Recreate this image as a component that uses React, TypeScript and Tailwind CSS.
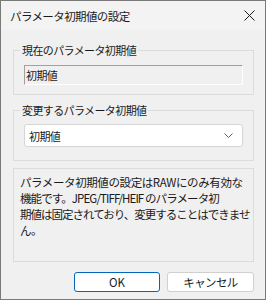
import React from "react";

const font = { fontFamily: '"Noto Sans CJK JP", "Noto Sans", sans-serif' };

export default function App() {
  return (
    <div
      style={font}
      className="w-[266px] h-[300px] flex flex-col border border-[#7a7a7a] bg-[#f0f0f0] text-[11px] tracking-[-0.6px] text-[#1a1a1a] overflow-hidden"
    >
      {/* title bar */}
      <div className="h-[29px] flex items-center justify-between bg-[#f3f3f3] pl-[9px] pr-[9px]">
        <span className="text-[11.5px] leading-[16px]">パラメータ初期値の設定</span>
        <svg width="11" height="11" viewBox="0 0 11 11" className="mr-[1px]">
          <path d="M0.5 0.5 L10.5 10.5 M10.5 0.5 L0.5 10.5" stroke="#1a1a1a" strokeWidth="1" />
        </svg>
      </div>

      <div className="flex flex-col pl-[12px] pr-[11px] pt-[12px]">
        {/* current value */}
        <fieldset className="border border-[#dcdcdc] px-[10px] pb-[9px]">
          <legend className="-ml-[4px] px-[2px] leading-[16px]">現在のパラメータ初期値</legend>
          <div className="mt-[7px] h-[20px] flex items-center border border-t-[#a0a0a0] border-l-[#a0a0a0] border-r-white border-b-white bg-[#f0f0f0] pl-[1px] leading-[16px]">
            初期値
          </div>
        </fieldset>

        {/* new value */}
        <fieldset className="mt-[7px] border border-[#dcdcdc] px-[10px] pb-[13px]">
          <legend className="-ml-[4px] px-[2px] leading-[16px]">変更するパラメータ初期値</legend>
          <div className="mt-[6px] h-[23px] flex items-center justify-between rounded-[3px] border border-[#d5d5d5] bg-white pl-[4px] pr-[9px] leading-[16px]">
            <span>初期値</span>
            <svg width="9" height="5" viewBox="0 0 9 5">
              <path d="M0.5 0.5 L4.5 4.5 L8.5 0.5" fill="none" stroke="#606060" strokeWidth="1" />
            </svg>
          </div>
        </fieldset>

        {/* note */}
        <div className="mt-[7px] h-[94px] border border-[#dcdcdc] pl-[6px] pr-[2px] pt-[5px] leading-[16px] whitespace-nowrap text-[11.5px] tracking-[-0.4px]">
          パラメータ初期値の設定はRAWにのみ有効な
          <br />
          <span className="tracking-[-0.9px]">機能です。JPEG/TIFF/HEIF のパラメータ初</span>
          <br />
          <span className="tracking-[-1px]">期値は固定されており、変更することはできませ</span>
          <br />
          ん。
        </div>

        {/* buttons */}
        <div className="mt-[10px] flex justify-end gap-[7px]">
          <button className="w-[86px] h-[20px] rounded-[3px] border border-[#0067c0] bg-white text-[11.5px] leading-[16px] tracking-normal">
            OK
          </button>
          <button className="w-[87px] h-[20px] rounded-[3px] border border-[#d0d0d0] bg-white text-[11.5px] leading-[16px]">
            キャンセル
          </button>
        </div>
      </div>
    </div>
  );
}
